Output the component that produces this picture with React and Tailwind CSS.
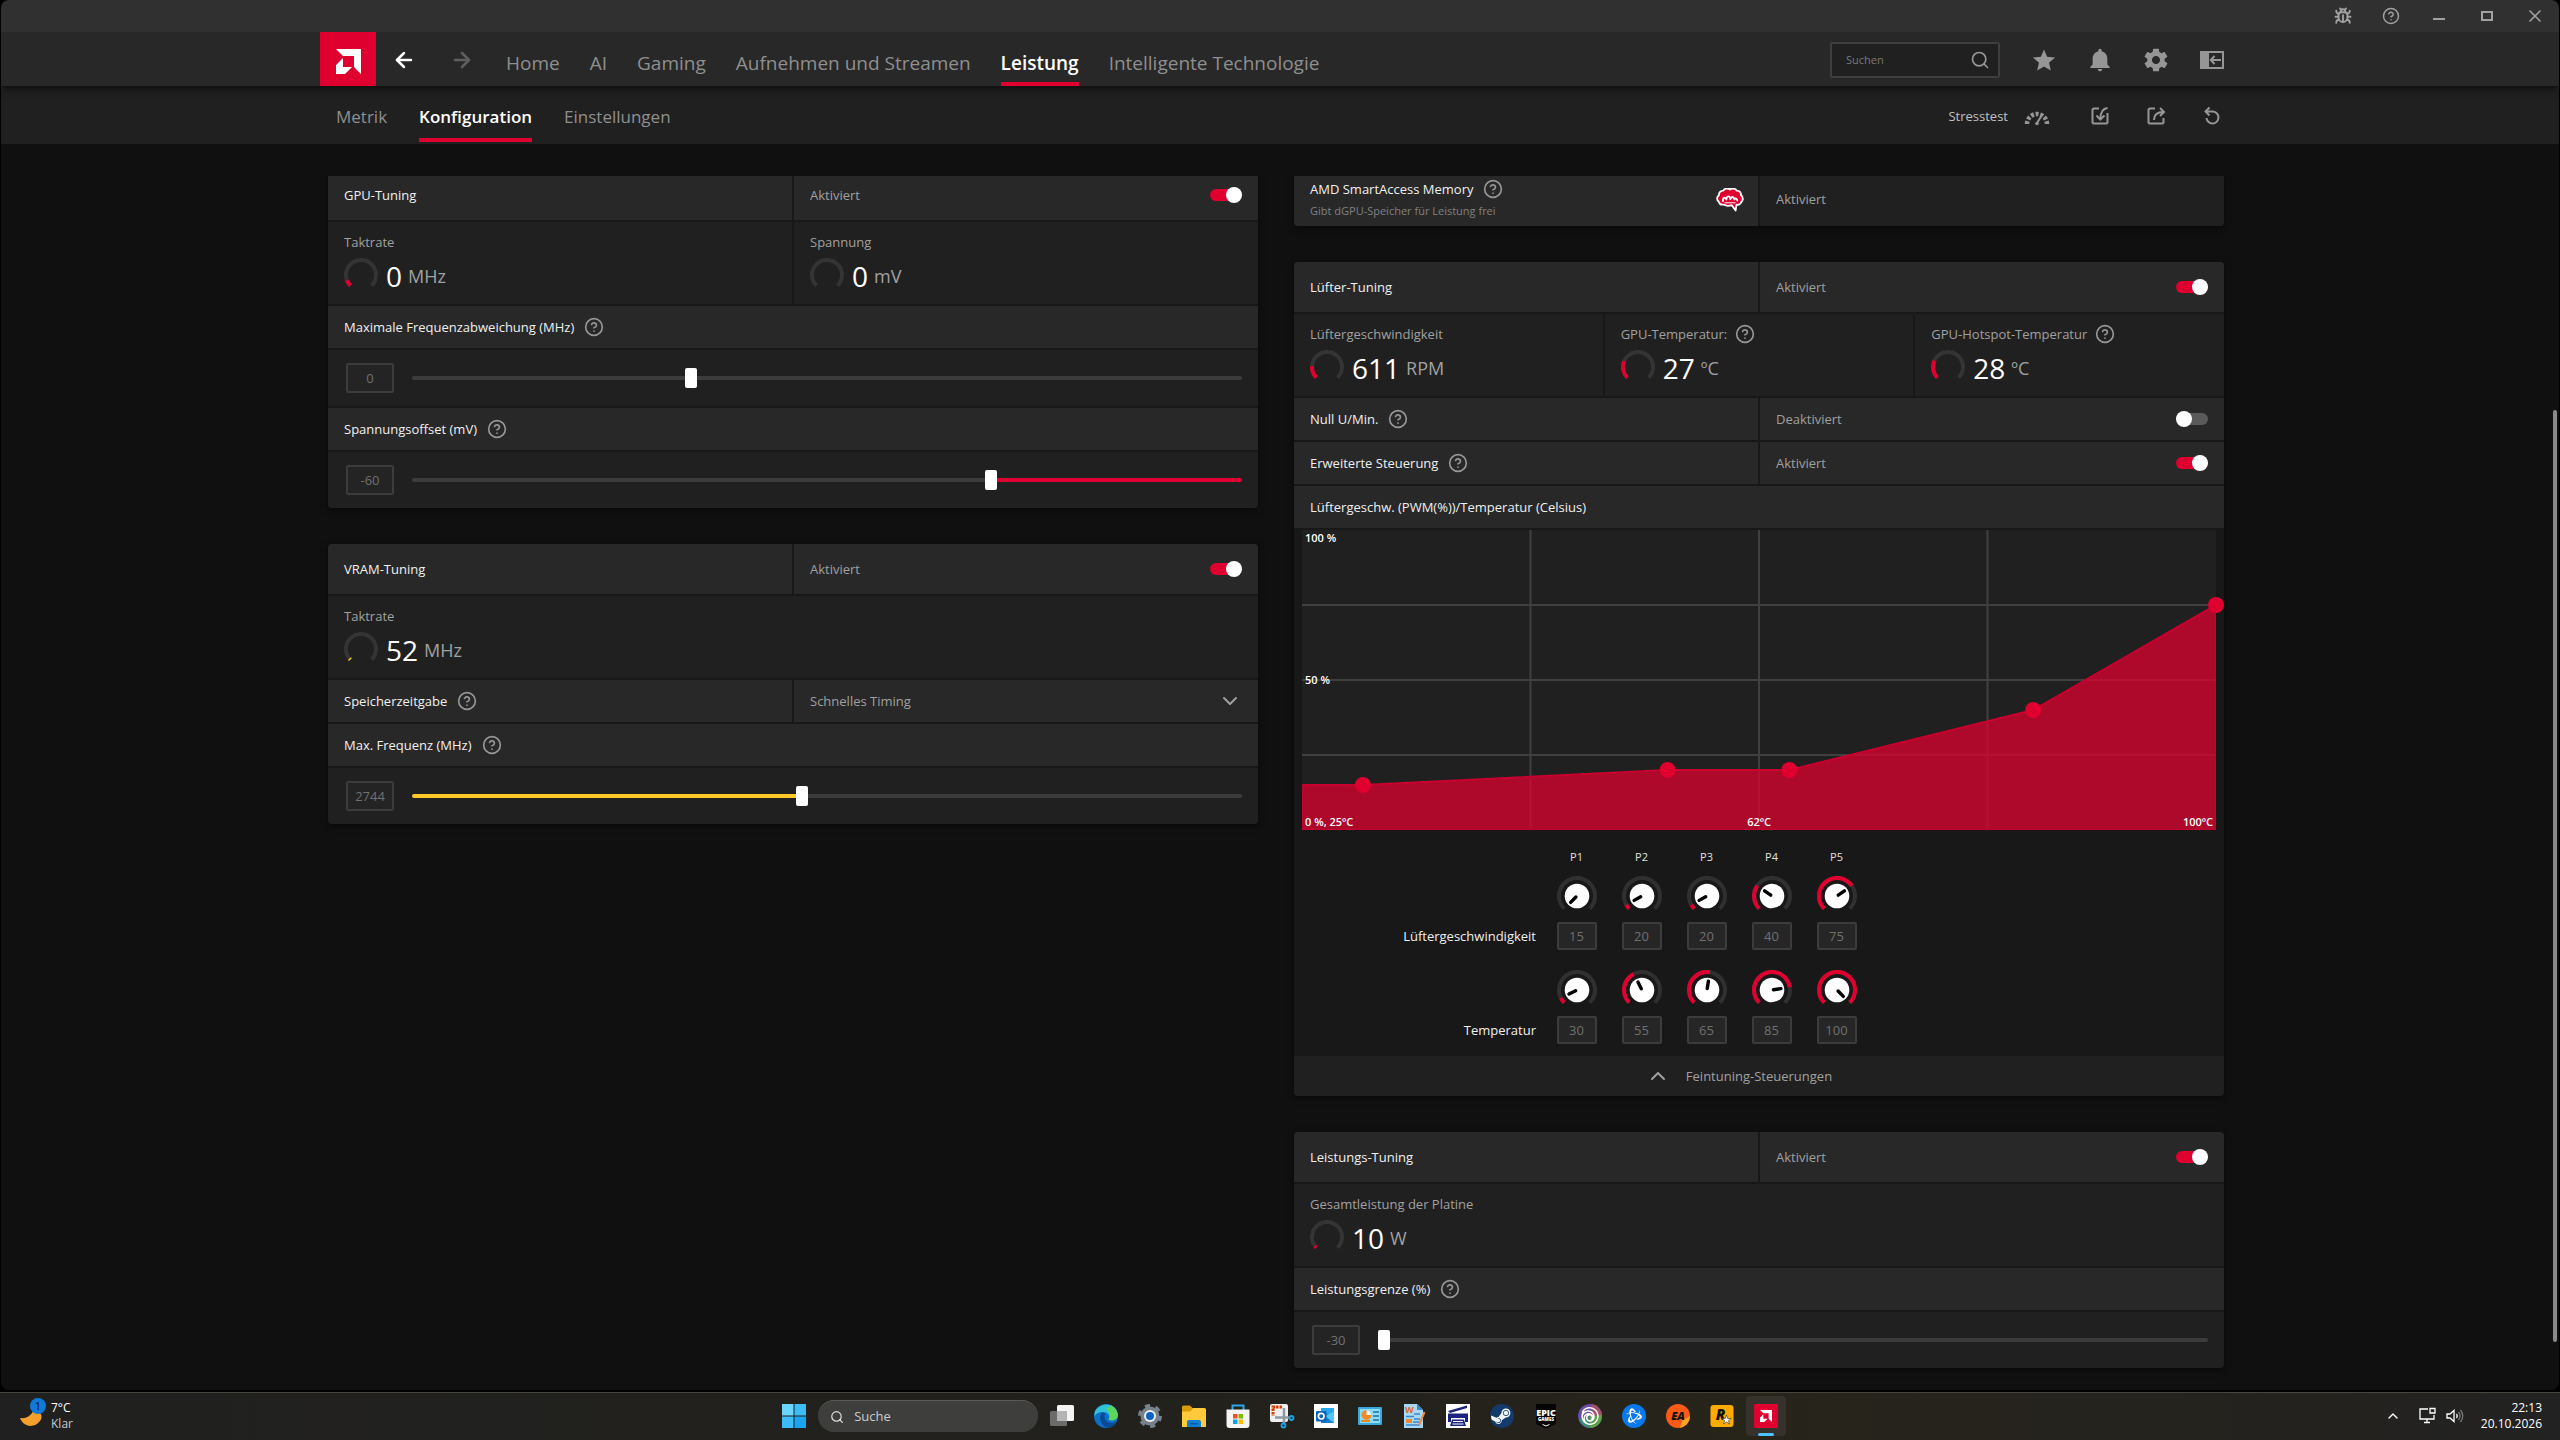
import { useState } from "react";
import {
  ArrowLeft,
  ArrowRight,
  Bug,
  ChevronDown,
  ChevronUp,
  CircleHelp,
  Search,
  X,
} from "lucide-react";
import { IoMdNotifications, IoMdSettings, IoMdStar } from "react-icons/io";
import { SiBattledotnet, SiSteam, SiUbisoft } from "react-icons/si";

const RED = "#e0002f";

const NAV = [
  "Home",
  "AI",
  "Gaming",
  "Aufnehmen und Streamen",
  "Leistung",
  "Intelligente Technologie",
];

const SUBNAV = ["Metrik", "Konfiguration", "Einstellungen"];

const FAN_POINTS = [
  { name: "P1", speed: 15, temp: 30 },
  { name: "P2", speed: 20, temp: 55 },
  { name: "P3", speed: 20, temp: 65 },
  { name: "P4", speed: 40, temp: 85 },
  { name: "P5", speed: 75, temp: 100 },
];

const AmdMark = ({ className }) => (
  <svg viewBox="0 0 25 25" className={className} fill="currentColor">
    <path d="M0 0H25V25L18 18V7H7Z" />
    <path d="M7 9V18H16L9 25H0V16Z" />
  </svg>
);

const Help = () => (
  <button aria-label="Hilfe" className="text-[#969696] shrink-0">
    <CircleHelp size={20} />
  </button>
);

const Toggle = ({ label, defaultChecked }) => (
  <input
    type="checkbox"
    role="switch"
    aria-label={label}
    defaultChecked={defaultChecked}
    className="appearance-none flex items-center w-8 h-3 rounded-full bg-[#5a5a5a] checked:bg-[#e0002f] checked:justify-end before:content-[''] before:block before:size-4 before:shrink-0 before:rounded-full before:bg-white"
  />
);

const Card = ({ children }) => (
  <section className="flex flex-col gap-0.5 bg-[#181818] rounded overflow-hidden shadow-[0_2px_6px_rgba(0,0,0,0.5)]">
    {children}
  </section>
);

const SwitchRow = ({ title, help, on, tall }) => (
  <div className={`grid grid-cols-2 gap-0.5 ${tall ? "h-[50px]" : "h-[42px]"}`}>
    <div className="flex items-center gap-2.5 px-4 bg-[#282828] text-[#f0f0f0]">
      {title}
      {help && <Help />}
    </div>
    <div className="flex items-center justify-between px-4 bg-[#282828] text-[#a0a0a0]">
      {on ? "Aktiviert" : "Deaktiviert"}
      <Toggle label={title} defaultChecked={on} />
    </div>
  </div>
);

const TitleRow = ({ title, help }) => (
  <div className="flex items-center gap-2.5 h-[42px] px-4 bg-[#282828] text-[#f0f0f0]">
    {title}
    {help && <Help />}
  </div>
);

const Metric = ({ label, help, value, unit, percent, color = RED }) => (
  <div className="pt-2.5 pb-3 px-4 bg-[#202020] text-[#a0a0a0]">
    <div className="flex items-center gap-2 h-5">
      {label}
      {help && <Help />}
    </div>
    <div className="flex items-center gap-2 h-[34px] mt-1.5">
      <svg viewBox="0 0 34 34" className="size-[34px] fill-none">
        <path
          d="M6.4 27.6A15 15 0 1 1 27.6 27.6"
          stroke="#343434"
          strokeWidth="4"
        />
        {percent > 0 && (
          <path
            d="M6.4 27.6A15 15 0 1 1 27.6 27.6"
            stroke={color}
            strokeWidth="4"
            pathLength="100"
            strokeDasharray={`${percent} 200`}
          />
        )}
      </svg>
      <div className="flex items-center gap-1.5 pt-0.5">
        <span className="text-[28px] leading-8 text-white">{value}</span>
        <span className="text-lg leading-8">{unit}</span>
      </div>
    </div>
  </div>
);

const SliderRow = ({ label, min, max, initial, fill }) => {
  const [value, setValue] = useState(initial);
  const p = ((value - min) / (max - min)) * 100;
  const left = fill === "left" ? "#ffc627" : "#3c3c3c";
  const right = fill === "right" ? RED : "#3c3c3c";

  return (
    <div className="flex items-center gap-[18px] h-14 pl-[18px] pr-4 bg-[#202020]">
      <input
        type="text"
        aria-label={label}
        value={value}
        onChange={(e) => setValue(e.target.value)}
        className="w-12 h-[30px] shrink-0 rounded-xs border-2 border-[#3c3c3c] bg-[#242424] text-center text-[#707070]"
      />
      <input
        type="range"
        aria-label={label}
        min={min}
        max={max}
        value={value}
        onChange={(e) => setValue(e.target.value)}
        style={{
          background: `linear-gradient(to right, ${left} ${p}%, ${right} ${p}%)`,
        }}
        className="appearance-none flex-1 min-w-0 h-1 rounded-full [&::-webkit-slider-thumb]:appearance-none [&::-webkit-slider-thumb]:w-3 [&::-webkit-slider-thumb]:h-5 [&::-webkit-slider-thumb]:rounded-xs [&::-webkit-slider-thumb]:bg-white"
      />
    </div>
  );
};

const FanChart = () => {
  const points = FAN_POINTS.map((p) => ({
    x: ((p.temp - 25) / 75) * 100,
    y: 100 - p.speed,
  }));
  const line = points.map((p) => `${p.x},${p.y}`).join(" ");

  return (
    <div className="relative mx-2 h-[300px] bg-[#202020] text-[11px] leading-4 font-semibold text-white">
      <svg className="w-full h-full overflow-visible">
        {["25%", "50%", "75%"].map((pos) => (
          <g key={pos} stroke="#404040" strokeWidth="2">
            <line x1={pos} x2={pos} y1="0" y2="100%" />
            <line x1="0" x2="100%" y1={pos} y2={pos} />
          </g>
        ))}
        <svg
          viewBox="0 0 100 100"
          preserveAspectRatio="none"
          width="100%"
          height="100%"
        >
          <polygon
            points={`0,100 0,85 ${line} 100,100`}
            fill={RED}
            fillOpacity="0.74"
            stroke="#c8002f"
            strokeWidth="2"
            vectorEffect="non-scaling-stroke"
          />
        </svg>
        {points.map((p, i) => (
          <circle key={i} cx={`${p.x}%`} cy={`${p.y}%`} r="8" fill={RED} />
        ))}
      </svg>
      <span className="absolute left-[3px] top-0">100 %</span>
      <span className="absolute left-[3px] top-1/2 -translate-y-1/2">50 %</span>
      <span className="absolute left-[3px] bottom-0">0 %, 25ºC</span>
      <span className="absolute left-1/2 -translate-x-1/2 bottom-0">62ºC</span>
      <span className="absolute right-[3px] bottom-0">100ºC</span>
    </div>
  );
};

const Knob = ({ percent }) => (
  <svg viewBox="0 0 40 40" className="size-10 fill-none">
    <path
      d="M7.3 32.7A18 18 0 1 1 32.7 32.7"
      stroke="#303030"
      strokeWidth="4"
    />
    {percent > 0 && (
      <path
        d="M7.3 32.7A18 18 0 1 1 32.7 32.7"
        stroke={RED}
        strokeWidth="4"
        pathLength="100"
        strokeDasharray={`${percent} 200`}
      />
    )}
    <circle cx="20" cy="20" r="12.3" fill="#fff" />
    <path
      d="M20 18.5V11"
      stroke="#000"
      strokeWidth="3.4"
      strokeLinecap="round"
      transform={`rotate(${percent * 2.7 - 135} 20 20)`}
    />
  </svg>
);

const KnobRow = ({ label, field, min }) => (
  <div className="grid grid-cols-[250px_repeat(5,65px)]">
    <span className="pr-2 pb-1 self-end leading-5 text-right text-[#f0f0f0]">
      {label}
    </span>
    {FAN_POINTS.map((p) => (
      <div key={p.name} className="flex flex-col items-center gap-1.5">
        <Knob percent={((p[field] - min) / (100 - min)) * 100} />
        <input
          type="text"
          aria-label={`${label} ${p.name}`}
          defaultValue={p[field]}
          className="w-10 h-7 rounded-xs border-2 border-[#3c3c3c] bg-[#262626] text-center text-[#707070]"
        />
      </div>
    ))}
  </div>
);

const BrainIcon = () => (
  <svg viewBox="0 0 28 24" className="w-7 h-6" strokeLinejoin="round">
    <path
      d="M14 1.5C16-.1 19.5.4 20.7 2.6 23.4 2.4 25.3 4.8 24.9 7 27.2 8.7 27.5 12.3 25.3 14 24.6 16.3 22.3 17.200 20.5 16.6L19.6 22.5 15.8 17.2C12.500 18.200 9.500 17.900 7.500 16.600 5.200 16.900 3.200 15.700 2.800 13.700.5 12.300.5 8.800 2.900 7.300 2.700 4.800 4.700 2.500 7.300 2.600 8.600.3 12-.1 14 1.500Z"
      fill={RED}
      stroke="#fff"
      strokeWidth="1.8"
    />
    <path
      d="M7 13C6.500 9.500 9.500 8.500 10.300 11.500 11 7.500 13.700 7.500 14.300 11.200 15.200 8.200 18 8.300 18.300 11.500 19.500 9.800 21 10.300 21.300 12.500"
      fill="none"
      stroke="#fff"
      strokeWidth="1.8"
      strokeLinecap="round"
    />
    <path d="M8.5 14.800H19.500" stroke="#fff" strokeWidth="1" />
  </svg>
);

const StressIcon = () => (
  <svg
    viewBox="0 0 26 22"
    className="w-[26px] h-[22px]"
    fill="none"
    stroke="currentColor"
  >
    <path
      d="M3 19A10 10 0 0 1 23 19"
      strokeWidth="4.5"
      strokeDasharray="3 1.73"
    />
    <path d="M13 18L16.5 12.5" strokeWidth="2" strokeLinecap="round" />
    <circle cx="13" cy="18.5" r="1.8" fill="currentColor" stroke="none" />
  </svg>
);

const ImportIcon = () => (
  <svg
    viewBox="0 0 20 20"
    className="size-5"
    fill="none"
    stroke="currentColor"
    strokeWidth="2"
  >
    <path d="M9 2.500H4A1.500 1.500 0 0 0 2.500 4V16A1.500 1.500 0 0 0 4 17.500H16A1.500 1.500 0 0 0 17.500 16V7" />
    <path d="M17.500 2C13 2.500 10.500 6 10.300 13M6.500 9.500L10.300 13.500 14.500 9.500" />
  </svg>
);

const ExportIcon = () => (
  <svg
    viewBox="0 0 20 20"
    className="size-5"
    fill="none"
    stroke="currentColor"
    strokeWidth="2"
  >
    <path d="M9 2.500H4A1.500 1.500 0 0 0 2.500 4V16A1.500 1.500 0 0 0 4 17.500H16A1.500 1.500 0 0 0 17.500 16V12" />
    <path d="M8 14C8 9 11 6 17.500 6M14 2L18 6 14 10" />
  </svg>
);

const ResetIcon = () => (
  <svg
    viewBox="0 0 20 20"
    className="size-5"
    fill="none"
    stroke="currentColor"
    strokeWidth="2"
  >
    <path d="M4 5.500H10.500A6 6 0 1 1 4.500 12M7.500 1.500L3.500 5.500 7.500 9.500" />
  </svg>
);

const PanelIcon = () => (
  <svg
    viewBox="0 0 24 20"
    className="w-6 h-5"
    fill="none"
    stroke="currentColor"
    strokeWidth="2"
  >
    <path d="M1 2H23V18H1Z" />
    <path d="M1 2H8V18H1Z" fill="currentColor" />
    <path d="M21 10H11M14.500 6L10.800 10 14.500 14" />
  </svg>
);

const TASKS = [
  {
    name: "Taskansicht",
    icon: (
      <>
        <rect x="7" y="1" width="17" height="16" rx="1.500" fill="#f4f4f4" />
        <rect y="7" width="17" height="15" rx="1.500" fill="#6b6b6b" />
        <path d="M7 7H17V17H7Z" fill="#b4b4b4" />
      </>
    ),
  },
  {
    name: "Edge",
    icon: (
      <>
        <circle cx="12" cy="12" r="12" fill="#0c70c8" />
        <path
          d="M.5 9.500C2-1 21-4 23.800 10 24.500 15 18 17.500 14.500 15.500 17 12 13.500 7.500 8.500 8 4 8 1 10.500.5 13Z"
          fill="#2fc2d8"
        />
        <path
          d="M17 1.500C22 4 24.500 9 23.800 12.500 22.500 17 17 17 14.500 15.500 18 11 15 7 12 5Z"
          fill="#5bd65a"
        />
        <path
          d="M8.500 8.500C3.500 13 7 23 14.500 23.700 19 23 21.500 20.500 22.500 17.500 15 22 8.500 16 11 9.500Z"
          fill="#0a4a95"
        />
      </>
    ),
  },
  {
    name: "Einstellungen",
    icon: (
      <>
        <circle cx="12" cy="12" r="9.500" fill="#76818c" />
        <circle
          cx="12"
          cy="12"
          r="10"
          fill="none"
          stroke="#76818c"
          strokeWidth="4"
          strokeDasharray="5 5.470"
        />
        <circle cx="12" cy="12" r="6" fill="#e9eef2" />
        <circle cx="12" cy="12" r="4" fill="#0b62c0" />
      </>
    ),
  },
  {
    name: "Explorer",
    icon: (
      <>
        <path d="M0 3A1.500 1.500 0 0 1 1.500 1.500H8L11 4.500V9H0Z" fill="#d99a08" />
        <path
          d="M0 7.500H8.500L11 4H22.500A1.500 1.500 0 0 1 24 5.500V23H0Z"
          fill="#ffcb3a"
        />
        <path
          d="M5 23V18A2 2 0 0 1 7 16H17A2 2 0 0 1 19 18V23Z"
          fill="#0f7fd6"
        />
        <path d="M8 19H16V20.500H8Z" fill="#0a57a5" />
      </>
    ),
  },
  {
    name: "Store",
    icon: (
      <>
        <path
          d="M6.500 6V1.500H17.500V6"
          fill="none"
          stroke="#27a9ea"
          strokeWidth="2"
        />
        <path
          d="M.5 5.500H23.500V21A3 3 0 0 1 20.500 24H3.500A3 3 0 0 1 .5 21Z"
          fill="#f3f3f3"
        />
        <path d="M7 10H11.500V14.500H7Z" fill="#f25022" />
        <path d="M12.500 10H17V14.500H12.500Z" fill="#7fba00" />
        <path d="M7 15.500H11.500V20H7Z" fill="#00a4ef" />
        <path d="M12.500 15.500H17V20H12.500Z" fill="#ffb900" />
      </>
    ),
  },
  {
    name: "Snipping Tool",
    icon: (
      <>
        <rect width="18" height="18" rx="2" fill="#f0f0f0" />
        <path
          d="M12 3H3V12"
          fill="none"
          stroke="#d83b01"
          strokeWidth="3"
          strokeDasharray="2.500 1"
        />
        <path d="M5 13.500H20M14 4V20" stroke="#8d99a3" strokeWidth="2.500" />
        <circle
          cx="21.500"
          cy="14"
          r="2"
          fill="none"
          stroke="#16a3ea"
          strokeWidth="1.800"
        />
        <circle
          cx="13.500"
          cy="21.500"
          r="2"
          fill="none"
          stroke="#16a3ea"
          strokeWidth="1.800"
        />
      </>
    ),
  },
  {
    name: "Outlook",
    icon: (
      <>
        <path d="M0 0H24V24H0Z" fill="#fff" />
        <path d="M7 4H20V19H7Z" fill="#28a8ea" />
        <path d="M7 10L20 10V19H7Z" fill="#1380d0" />
        <path d="M11 12L20 7.500V19Z" fill="#50c8f5" />
        <rect x="2" y="7" width="10.500" height="10.500" rx="1" fill="#0a62b8" />
        <circle
          cx="7.200"
          cy="12.200"
          r="2.800"
          fill="none"
          stroke="#fff"
          strokeWidth="1.700"
        />
      </>
    ),
  },
  {
    name: "Systemsteuerung",
    icon: (
      <>
        <rect y="3" width="24" height="18" rx="1" fill="#3aa7dd" />
        <path d="M2 5H22V19H2Z" fill="#8fdcf8" />
        <circle cx="8.500" cy="11" r="4.500" fill="#f4f8fa" />
        <path d="M8.500 11V6A5 5 0 1 0 13.500 11Z" fill="#f08a24" />
        <path
          d="M15 8H21M15 12H21M15 16H21"
          stroke="#1a6fae"
          strokeWidth="1.700"
        />
        <path d="M3 17H12" stroke="#e58a1f" strokeWidth="2" />
      </>
    ),
  },
  {
    name: "WordPad",
    icon: (
      <>
        <path d="M2 0H15L21 6V24H2Z" fill="#a9d8f5" />
        <path d="M15 0L21 6H15Z" fill="#3d86c6" />
        <text x="3" y="9" fontSize="9" fontWeight="700" fill="#d86b1c">
          W
        </text>
        <path
          d="M12 10H18M4 12.500H12M12 15H18M4 21H18M11 18H18"
          stroke="#3d86c6"
          strokeWidth="1.600"
        />
        <path d="M4 15H10V19H4Z" fill="#ee8833" />
        <path d="M22.500 8L17 21" stroke="#f08c3a" strokeWidth="2" />
      </>
    ),
  },
  {
    name: "Drucker",
    icon: (
      <>
        <path d="M0 0H24V24H0Z" fill="#fff" />
        <path d="M2 7L21 1.500V4L4 9Z" fill="#1a2380" />
        <path d="M2 9.500H22V18H19V14H5V18H2Z" fill="#1a2380" />
        <path d="M6 15.500H18L20 22H4Z" fill="#1a2380" />
        <path d="M7 17.500H17M6.500 20H17.500" stroke="#fff" strokeWidth="1" />
      </>
    ),
  },
  {
    name: "Steam",
    icon: (
      <>
        <circle cx="12" cy="12" r="11" fill="#f2f5f8" />
        <SiSteam size={24} color="#123a6b" />
      </>
    ),
  },
  {
    name: "Epic Games",
    icon: (
      <>
        <path d="M2 0H22V20L12 24.500 2 20Z" fill="#050505" />
        <text
          x="12"
          y="11.500"
          fontSize="9"
          fontWeight="800"
          textAnchor="middle"
          fill="#fff"
        >
          EPIC
        </text>
        <text
          x="12"
          y="17"
          fontSize="4.500"
          fontWeight="800"
          textAnchor="middle"
          fill="#fff"
        >
          GAMES
        </text>
        <path d="M8.500 20.500L12 22 15.500 20.500" fill="none" stroke="#fff" />
      </>
    ),
  },
  {
    name: "Ubisoft Connect",
    icon: (
      <>
        <circle cx="12" cy="12" r="12" fill="#6a4ca8" />
        <path d="M12 12L23 7A12 12 0 0 1 12 24Z" fill="#5fa04a" />
        <path d="M12 12V24A12 12 0 0 1 1 15Z" fill="#3b8f74" />
        <path d="M12 12L14 0A12 12 0 0 1 24 11Z" fill="#a4506c" />
        <svg x="3" y="3" width="18" height="18">
          <SiUbisoft size={18} color="#fff" />
        </svg>
      </>
    ),
  },
  {
    name: "Battle.net",
    icon: (
      <>
        <circle cx="12" cy="12" r="12" fill="#0878ea" />
        <svg x="4" y="4" width="16" height="16">
          <SiBattledotnet size={16} color="#fff" />
        </svg>
      </>
    ),
  },
  {
    name: "EA",
    icon: (
      <>
        <circle cx="12" cy="12" r="12" fill="#f95a16" />
        <path d="M14 24A12 12 0 0 0 24 12L16 17Z" fill="#ffa326" />
        <text
          x="12"
          y="16"
          fontSize="11"
          fontWeight="800"
          fontStyle="italic"
          textAnchor="middle"
          fill="#111"
        >
          EA
        </text>
      </>
    ),
  },
  {
    name: "Rockstar Games",
    icon: (
      <>
        <rect x=".5" y="1" width="23" height="22" rx="3" fill="#ffab00" />
        <text
          x="10.500"
          y="15.500"
          fontSize="15"
          fontWeight="800"
          fontStyle="italic"
          textAnchor="middle"
          fill="#111"
        >
          R
        </text>
        <path
          d="M16.500 11L17.700 14.500H21.200L18.400 16.600 19.500 20 16.500 18 13.500 20 14.600 16.600 11.800 14.500H15.300Z"
          fill="#fff"
          stroke="#333"
          strokeWidth=".6"
        />
      </>
    ),
  },
];

const Taskbar = () => (
  <footer className="grid grid-cols-[1fr_auto_1fr] items-center h-12 pb-px border-t border-[#46463f] bg-[linear-gradient(90deg,#202020,#22211c_50%,#27241a_68%,#222222)] text-xs text-white">
    <div className="flex items-center gap-[5px] pl-[18px]">
      <svg viewBox="0 0 28 30" className="w-7 h-[30px] overflow-visible">
        <path
          d="M2 17C9 18 14 14 16 8 22 10 26 15 22 20 17 27 6 27 2 17Z"
          fill="#f5a02c"
        />
        <circle cx="20" cy="5" r="8" fill="#0f7ad8" />
        <text x="20" y="9" fontSize="11" textAnchor="middle" fill="#0a0a0a">
          1
        </text>
      </svg>
      <div className="leading-4">
        <div>7°C</div>
        <div className="text-[#c8c8c8]">Klar</div>
      </div>
    </div>
    <div className="flex items-center">
      <button aria-label="Start" className="flex justify-center w-11 mr-0.5">
        <svg viewBox="0 0 24 24" className="size-6" fill="#3cbcf8">
          <path d="M0 0H11.500V11.500H0Z" fill="#6ad6fc" />
          <path d="M12.500 0H24V11.500H12.500Z" />
          <path d="M0 12.500H11.500V24H0Z" />
          <path d="M12.500 12.500H24V24H12.500Z" fill="#1ba4f2" />
        </svg>
      </button>
      <label className="flex items-center gap-2.5 w-[220px] h-8 pl-3 mr-0.5 rounded-full bg-[#3e3e3c] border-t border-[#5a5a58]">
        <Search size={16} className="text-[#e0e0e0]" />
        <input
          type="text"
          aria-label="Suche"
          placeholder="Suche"
          className="w-full min-w-0 text-[13px] placeholder:text-[#cccccc]"
        />
      </label>
      {TASKS.map((t) => (
        <button
          key={t.name}
          aria-label={t.name}
          className="flex justify-center w-11"
        >
          <svg viewBox="0 0 24 24" className="size-6 overflow-visible">
            {t.icon}
          </svg>
        </button>
      ))}
      <div className="flex justify-center w-11">
        <button
          aria-label="AMD Software"
          className="relative flex justify-center items-center size-10 rounded bg-[#34322b]"
        >
          <span className="flex justify-center items-center size-6 bg-[#e0002f] text-white">
            <AmdMark className="size-3" />
          </span>
          <span className="absolute bottom-0 w-4 h-[3px] rounded-full bg-[#4cc2ff]" />
        </button>
      </div>
    </div>
    <div className="flex items-center justify-end gap-2 pr-[18px]">
      <ChevronUp size={16} className="mr-2" />
      <svg
        viewBox="0 0 20 20"
        className="size-5"
        fill="none"
        stroke="#fff"
        strokeWidth="1.300"
      >
        <path d="M11 3H3V13H17V9M7 16.500H13M10 13V16M13 2.500H18V7H13Z" />
      </svg>
      <svg
        viewBox="0 0 20 20"
        className="size-5 mr-2"
        fill="none"
        stroke="#fff"
        strokeWidth="1.300"
      >
        <path d="M2 8V12H5L9 15.500V4.500L5 8ZM11.500 8Q13 10 11.500 12" />
        <path
          d="M13.500 6Q16.500 10 13.500 14M15.500 4Q20 10 15.500 16"
          stroke="#777"
        />
      </svg>
      <div className="leading-4 text-right">
        <div>22:13</div>
        <div>20.10.2026</div>
      </div>
    </div>
  </footer>
);

const WindowButton = ({ label, children }) => (
  <button
    aria-label={label}
    className="flex items-center justify-center w-12 h-8"
  >
    {children}
  </button>
);

const Header = () => (
  <header>
    <div className="flex justify-end h-8 bg-[#303030] text-[#a0a0a0]">
      <WindowButton label="Fehler melden">
        <Bug size={18} strokeWidth={2.5} />
      </WindowButton>
      <WindowButton label="Hilfe">
        <CircleHelp size={18} />
      </WindowButton>
      <WindowButton label="Minimieren">
        <span className="w-3 h-0.5 mt-1.5 bg-current" />
      </WindowButton>
      <WindowButton label="Maximieren">
        <span className="w-3 h-2.5 border-2 border-current" />
      </WindowButton>
      <WindowButton label="Schließen">
        <X size={20} />
      </WindowButton>
    </div>
    <div className="relative z-10 bg-[#282828] shadow-[0_6px_6px_-2px_rgba(0,0,0,0.5)]">
      <div className="flex items-center w-full max-w-[1920px] h-[54px] mx-auto pr-4">
        <a
          href="#home"
          aria-label="AMD"
          className="flex justify-center items-center w-14 h-full pt-1 bg-[#e0002f] text-white"
        >
          <AmdMark className="size-[25px]" />
        </a>
        <button aria-label="Zurück" className="ml-4 pt-0.5 text-white">
          <ArrowLeft size={24} strokeWidth={2.5} />
        </button>
        <button aria-label="Vorwärts" className="ml-[34px] pt-0.5 text-[#5f5f5f]">
          <ArrowRight size={24} strokeWidth={2.5} />
        </button>
        <nav className="flex gap-[30px] h-full ml-8 text-[19px]">
          {NAV.map((item) => (
            <a
              key={item}
              href={`#${item}`}
              className={`flex items-center h-full pt-3 border-b-4 ${
                item === "Leistung"
                  ? "border-[#e0002f] text-white font-semibold"
                  : "border-transparent text-[#8f8f8f]"
              }`}
            >
              {item}
            </a>
          ))}
        </nav>
        <div className="flex items-center gap-8 ml-auto pt-0.5 text-[#969696]">
          <label className="flex items-center w-[170px] h-9 pl-3.5 pr-2 rounded-xs border-2 border-[#3e3e3e] bg-[#202020]">
            <input
              type="text"
              aria-label="Suchen"
              placeholder="Suchen"
              className="flex-1 min-w-0 text-[11px] placeholder:text-[#787878]"
            />
            <Search size={20} />
          </label>
          <button aria-label="Favoriten">
            <IoMdStar size={28} className="-mx-0.5" />
          </button>
          <button aria-label="Benachrichtigungen">
            <IoMdNotifications size={28} className="-mx-0.5" />
          </button>
          <button aria-label="Einstellungen">
            <IoMdSettings size={28} className="-mx-0.5" />
          </button>
          <button aria-label="Seitenleiste">
            <PanelIcon />
          </button>
        </div>
      </div>
    </div>
    <div className="bg-[#202020]">
      <div className="flex items-center w-full max-w-[1920px] h-[58px] mx-auto pl-4 pr-4">
        <nav className="flex gap-8 h-full pb-0.5 text-[17px]">
          {SUBNAV.map((item) => (
            <a
              key={item}
              href={`#${item}`}
              className={`flex items-center h-full pt-2.5 border-b-4 ${
                item === "Konfiguration"
                  ? "border-[#e0002f] text-white font-semibold"
                  : "border-transparent text-[#8f8f8f]"
              }`}
            >
              {item}
            </a>
          ))}
        </nav>
        <div className="flex items-center gap-9 ml-auto pt-0.5 pr-0.5 text-[#969696]">
          <button className="flex items-center gap-4 text-[#c0c0c0]">
            Stresstest
            <span className="text-[#969696]">
              <StressIcon />
            </span>
          </button>
          <button aria-label="Importieren" className="ml-1">
            <ImportIcon />
          </button>
          <button aria-label="Exportieren">
            <ExportIcon />
          </button>
          <button aria-label="Zurücksetzen">
            <ResetIcon />
          </button>
        </div>
      </div>
    </div>
  </header>
);

export default function App() {
  return (
    <div className="flex flex-col min-h-screen bg-black font-['Open_Sans','Noto_Sans',sans-serif] text-[13px] leading-5">
      <div className="relative flex flex-col flex-1 mb-0.5 mx-px rounded-lg overflow-hidden bg-[#101010]">
        <Header />
        <main className="flex-1 mt-8 overflow-hidden">
          <div className="grid grid-cols-2 items-start gap-9 w-full max-w-[1920px] mx-auto pl-2 pr-4 pb-5 -mt-1.5">
            <div className="flex flex-col gap-9">
              <Card>
                <SwitchRow title="GPU-Tuning" on tall />
                <div className="grid grid-cols-2 gap-0.5">
                  <Metric label="Taktrate" value="0" unit="MHz" percent={9} />
                  <Metric label="Spannung" value="0" unit="mV" percent={0} />
                </div>
                <TitleRow title="Maximale Frequenzabweichung (MHz)" help />
                <SliderRow
                  label="Maximale Frequenzabweichung"
                  min={-500}
                  max={1000}
                  initial={0}
                />
                <TitleRow title="Spannungsoffset (mV)" help />
                <SliderRow
                  label="Spannungsoffset"
                  min={-200}
                  max={0}
                  initial={-60}
                  fill="right"
                />
              </Card>

              <Card>
                <SwitchRow title="VRAM-Tuning" on tall />
                <Metric
                  label="Taktrate"
                  value="52"
                  unit="MHz"
                  percent={2}
                  color="#ffc627"
                />
                <div className="grid grid-cols-2 gap-0.5 h-[42px]">
                  <div className="flex items-center gap-2.5 px-4 bg-[#282828] text-[#f0f0f0]">
                    <label htmlFor="timing">Speicherzeitgabe</label>
                    <Help />
                  </div>
                  <div className="relative flex items-center bg-[#282828] text-[#a0a0a0]">
                    <select
                      id="timing"
                      className="appearance-none w-full h-full px-4"
                    >
                      <option>Schnelles Timing</option>
                      <option>Standard</option>
                    </select>
                    <ChevronDown
                      size={24}
                      className="absolute right-4 pointer-events-none"
                    />
                  </div>
                </div>
                <TitleRow title="Max. Frequenz (MHz)" help />
                <SliderRow
                  label="Max. Frequenz"
                  min={2500}
                  max={3020}
                  initial={2744}
                  fill="left"
                />
              </Card>
            </div>

            <div className="flex flex-col gap-9">
              <Card>
                <div className="grid grid-cols-2 gap-0.5 h-14">
                  <div className="flex items-center justify-between pt-1 pl-4 pr-3.5 bg-[#282828]">
                    <div>
                      <div className="flex items-center gap-2.5 h-5 text-[#f0f0f0]">
                        AMD SmartAccess Memory
                        <Help />
                      </div>
                      <div className="mt-0.5 text-[11px] leading-5 text-[#808080]">
                        Gibt dGPU-Speicher für Leistung frei
                      </div>
                    </div>
                    <BrainIcon />
                  </div>
                  <div className="flex items-center pt-0.5 px-4 bg-[#202020] text-[#a0a0a0]">
                    Aktiviert
                  </div>
                </div>
              </Card>

              <Card>
                <SwitchRow title="Lüfter-Tuning" on tall />
                <div className="grid grid-cols-3 gap-0.5">
                  <Metric
                    label="Lüftergeschwindigkeit"
                    value="611"
                    unit="RPM"
                    percent={18}
                  />
                  <Metric
                    label="GPU-Temperatur:"
                    help
                    value="27"
                    unit="ºC"
                    percent={25}
                  />
                  <Metric
                    label="GPU-Hotspot-Temperatur"
                    help
                    value="28"
                    unit="ºC"
                    percent={26}
                  />
                </div>
                <SwitchRow title="Null U/Min." help />
                <SwitchRow title="Erweiterte Steuerung" help on />
                <TitleRow title="Lüftergeschw. (PWM(%))/Temperatur (Celsius)" />
                <FanChart />
                <div className="flex flex-col pt-4 pb-2.5">
                  <div className="grid grid-cols-[250px_repeat(5,65px)] mb-2.5 text-[11px] leading-[18px] text-center text-[#e0e0e0]">
                    <span />
                    {FAN_POINTS.map((p) => (
                      <span key={p.name}>{p.name}</span>
                    ))}
                  </div>
                  <div className="flex flex-col gap-5">
                    <KnobRow
                      label="Lüftergeschwindigkeit"
                      field="speed"
                      min={15}
                    />
                    <KnobRow label="Temperatur" field="temp" min={25} />
                  </div>
                </div>
                <button className="flex items-center justify-center gap-4 h-10 pr-10 bg-[#202020] text-[#a0a0a0]">
                  <ChevronUp size={24} />
                  Feintuning-Steuerungen
                </button>
              </Card>

              <Card>
                <SwitchRow title="Leistungs-Tuning" on tall />
                <Metric
                  label="Gesamtleistung der Platine"
                  value="10"
                  unit="W"
                  percent={3}
                />
                <TitleRow title="Leistungsgrenze (%)" help />
                <SliderRow
                  label="Leistungsgrenze"
                  min={-30}
                  max={15}
                  initial={-30}
                />
              </Card>
            </div>
          </div>
        </main>
        {/* scrollbar */}
        <div className="absolute right-0.5 top-[410px] bottom-12 w-1 rounded-full bg-[#8a8a8a]" />
      </div>
      <Taskbar />
    </div>
  );
}
